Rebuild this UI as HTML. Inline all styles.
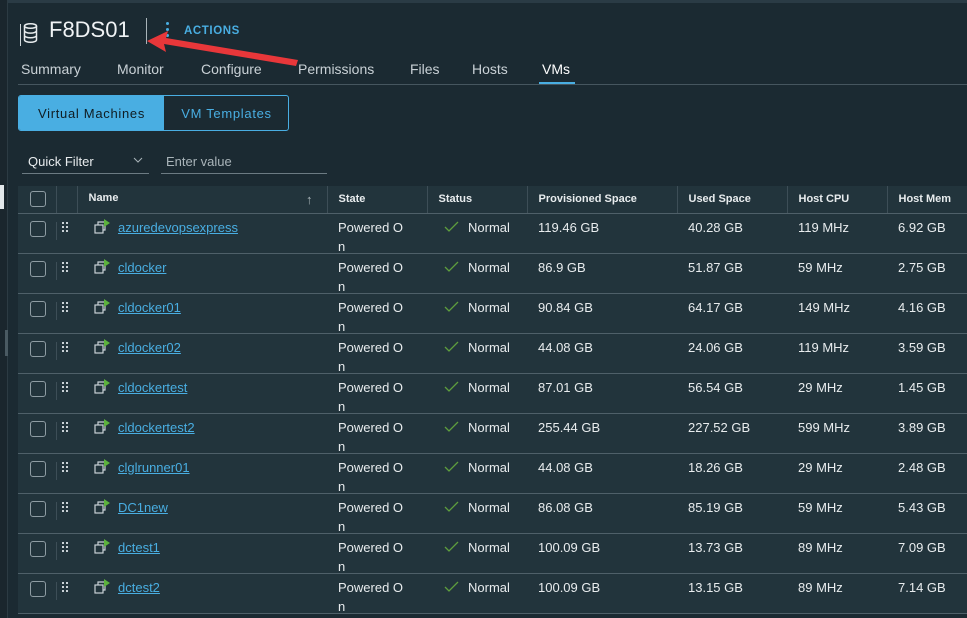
<!DOCTYPE html>
<html><head><meta charset="utf-8"><style>
*{box-sizing:border-box;margin:0;padding:0}
body{width:967px;height:618px;overflow:hidden;background:#1b2a32;font-family:"Liberation Sans",sans-serif;color:#e8ecee;position:relative}
.abs{position:absolute}
.tab{position:absolute;top:61px;font-size:14px;color:#c9d1d6}
table{position:absolute;left:18px;top:186px;border-collapse:collapse;background:#22343c;table-layout:fixed;width:960px}
td,th{border-bottom:1px solid #4f6069;font-size:13px;vertical-align:top;text-align:left;padding:0 0 0 11px;color:#e8ecee;font-weight:normal}
th{height:27px;vertical-align:middle;font-size:11px;font-weight:bold;border-left:1px solid #3d4e57}
th:first-child{border-left:none}
td{height:40px;padding-top:0}
td>div.c{height:39px;padding-top:4px;line-height:19px;overflow:hidden;white-space:nowrap}
.cb{width:16px;height:16px;border:1px solid #8e9ca3;border-radius:3px;margin-left:1px;margin-top:-1px}
td .cb{margin-top:3px}
a{color:#49aee2;text-decoration:underline}
</style></head><body>
<div class="abs" style="left:0;top:0;width:967px;height:3px;background:#2a3b45"></div>
<div class="abs" style="left:0;top:0;width:8px;height:618px;background:#1a262d;border-right:1px solid #2c3b43"></div>
<div class="abs" style="left:0;top:185px;width:4px;height:24px;background:#e3e8ea"></div>
<div class="abs" style="left:5px;top:330px;width:3px;height:26px;background:#4a5a62"></div>
<svg class="abs" style="left:19px;top:20px" width="22" height="26" viewBox="0 0 22 26"><line x1="1.5" y1="4" x2="1.5" y2="26" stroke="#cfd6da" stroke-width="1"/><g fill="none" stroke="#e8ecee" stroke-width="1.5"><ellipse cx="11.5" cy="6" rx="6" ry="2.3"/><path d="M5.5 6v14c0 1.2 2.7 2.3 6 2.3s6-1.1 6-2.3V6M5.5 10.8c0 1.2 2.7 2.3 6 2.3s6-1.1 6-2.3M5.5 15.5c0 1.2 2.7 2.3 6 2.3s6-1.1 6-2.3"/></g></svg>
<div class="abs" style="left:49px;top:17px;font-size:22px;color:#f0f3f5">F8DS01</div>
<div class="abs" style="left:146px;top:18px;width:1px;height:26px;background:#a9b4b9"></div>
<div class="abs" style="left:166px;top:22px;width:3px;height:3px;border-radius:50%;background:#49aee2;box-shadow:0 6px 0 #49aee2,0 12px 0 #49aee2"></div>
<div class="abs" style="left:184px;top:25px;color:#49aee2;font-size:11.5px;font-weight:bold;letter-spacing:.6px">ACTIONS</div>
<svg class="abs" style="left:140px;top:25px" width="160" height="45"><polygon points="7,16 28,6 26,13 158,35 156,41 24,19 26,27" fill="#e8373a"/></svg>
<div class="tab" style="left:21px">Summary</div>
<div class="tab" style="left:117px">Monitor</div>
<div class="tab" style="left:201px">Configure</div>
<div class="tab" style="left:298px">Permissions</div>
<div class="tab" style="left:410px">Files</div>
<div class="tab" style="left:472px">Hosts</div>
<div class="tab" style="left:542px;color:#fff">VMs</div>
<div class="abs" style="left:539px;top:82px;width:36px;height:3px;background:#49aee2"></div>
<div class="abs" style="left:18px;top:84px;width:949px;height:1px;background:#46565f"></div>
<div class="abs" style="left:18px;top:95px;width:271px;height:36px;border:1px solid #49aee2;border-radius:3px;overflow:hidden">
<div style="position:absolute;left:0;top:0;width:145px;height:34px;background:#49aee2;color:#0f1c22;font-size:13px;line-height:35px;text-align:center;letter-spacing:.7px">Virtual Machines</div>
<div style="position:absolute;left:145px;top:0;width:125px;height:34px;color:#49aee2;font-size:13px;line-height:35px;text-align:center;letter-spacing:.7px">VM Templates</div></div>
<div class="abs" style="left:28px;top:154px;font-size:13px">Quick Filter</div>
<svg class="abs" style="left:133px;top:157px" width="10" height="6"><path d="M1 1l4 4 4-4" fill="none" stroke="#a9b4b9" stroke-width="1"/></svg>
<div class="abs" style="left:22px;top:173px;width:127px;height:1px;background:#6c7b83"></div>
<div class="abs" style="left:166px;top:154px;font-size:13px;color:#a9b4b9">Enter value</div>
<div class="abs" style="left:161px;top:173px;width:166px;height:1px;background:#6c7b83"></div>
<table>
<colgroup><col style="width:38px"><col style="width:21px"><col style="width:250px"><col style="width:100px"><col style="width:100px"><col style="width:150px"><col style="width:110px"><col style="width:100px"><col style="width:91px"></colgroup>
<tr><th><div class="cb"></div></th><th></th><th>Name<span style="float:right;margin-right:14px;font-weight:normal;color:#a9b4b9;font-size:13px">↑</span></th><th>State</th><th>Status</th><th>Provisioned Space</th><th>Used Space</th><th>Host CPU</th><th>Host Mem</th></tr>
</table>
<script>
const rows=[["azuredevopsexpress","119.46 GB","40.28 GB","119 MHz","6.92 GB"],["cldocker","86.9 GB","51.87 GB","59 MHz","2.75 GB"],["cldocker01","90.84 GB","64.17 GB","149 MHz","4.16 GB"],["cldocker02","44.08 GB","24.06 GB","119 MHz","3.59 GB"],["cldockertest","87.01 GB","56.54 GB","29 MHz","1.45 GB"],["cldockertest2","255.44 GB","227.52 GB","599 MHz","3.89 GB"],["clglrunner01","44.08 GB","18.26 GB","29 MHz","2.48 GB"],["DC1new","86.08 GB","85.19 GB","59 MHz","5.43 GB"],["dctest1","100.09 GB","13.73 GB","89 MHz","7.09 GB"],["dctest2","100.09 GB","13.15 GB","89 MHz","7.14 GB"]];
const icon='<svg width="17" height="16" viewBox="0 0 17 16" style="vertical-align:-3px;margin:0 7px 0 17px"><g fill="none" stroke="#c9d1d6" stroke-width="1.2"><rect x="1" y="6" width="8" height="8"/><path d="M4 6V3h7v8H9"/></g><polygon points="10,0 16,4 10,8" fill="#5cb33d"/></svg>';
const drag='<svg width="6" height="10" style="margin:4px 0 0 5px;display:block"><g fill="#c9d1d6"><rect x="0" y="0" width="2" height="2"/><rect x="4" y="0" width="2" height="2"/><rect x="0" y="4" width="2" height="2"/><rect x="4" y="4" width="2" height="2"/><rect x="0" y="8" width="2" height="2"/><rect x="4" y="8" width="2" height="2"/></g></svg>';
const ck='<svg width="16" height="12" style="margin:0 8px 0 6px;vertical-align:-1px"><path d="M1 6l4 4 9-9" fill="none" stroke="#5e9e3e" stroke-width="1.3"/></svg>';
const C=s=>`<div class="c">${s}</div>`;
let h='';for(const r of rows){h+=`<tr><td>${C('<div class="cb"></div>')}</td><td style="padding:0">${C('<div style="border-left:1px solid #3d4e57;height:18px;margin-top:2px">'+drag+'</div>')}</td><td style="padding-left:0">${C(icon+'<a>'+r[0]+'</a>')}</td><td>${C('Powered O<br>n')}</td><td>${C(ck+'Normal')}</td><td>${C(r[1])}</td><td>${C(r[2])}</td><td>${C(r[3])}</td><td>${C(r[4])}</td></tr>`}
document.querySelector('table').insertAdjacentHTML('beforeend',h);
</script>
</body></html>
